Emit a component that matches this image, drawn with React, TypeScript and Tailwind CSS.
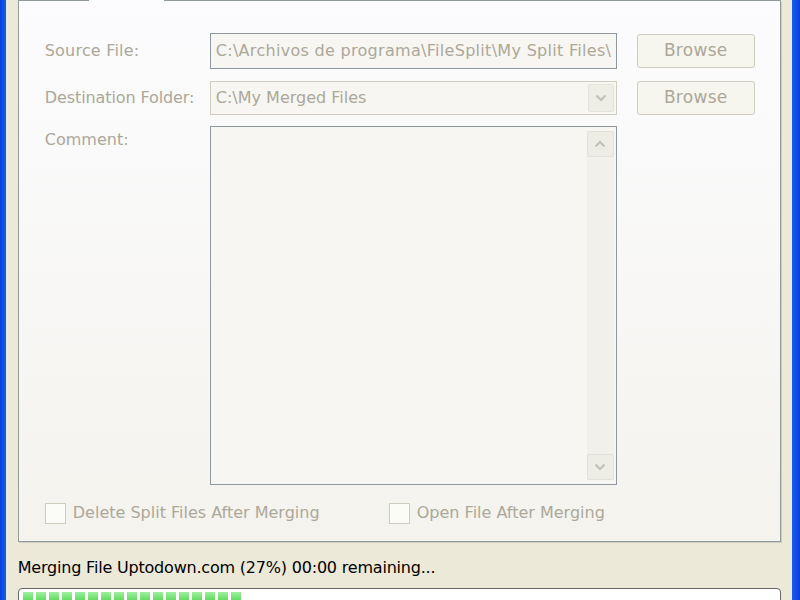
import React from "react";

const font = { fontFamily: '"DejaVu Sans", Verdana, sans-serif' };

function Chevron({ up }: { up?: boolean }) {
  return (
    <svg width="12" height="8" viewBox="0 0 12 8">
      <path
        d={up ? "M1.5 6.5 L6 2 L10.5 6.5" : "M1.5 1.5 L6 6 L10.5 1.5"}
        fill="none"
        stroke="#c3c1b6"
        strokeWidth="2.2"
      />
    </svg>
  );
}

function Browse() {
  return (
    <div className="flex h-[34px] w-[118px] items-center justify-center rounded-[3px] border border-[#cfcdc0] bg-[#f6f5ee] text-[17px] tracking-[0.3px] text-[#aca899]">
      Browse
    </div>
  );
}

function Check({ label }: { label: string }) {
  return (
    <div className="flex items-center gap-[7px]">
      <div className="h-[21px] w-[21px] border border-[#cfcdc0] bg-[#fbfbf8]" />
      <span className="text-[16px] text-[#aca899]">{label}</span>
    </div>
  );
}

export default function App() {
  const blocks = Array.from({ length: 17 });
  return (
    <div style={font} className="flex h-[600px] w-[800px] overflow-hidden bg-[#ece9d8]">
      <div className="w-[7px] bg-gradient-to-r from-[#0b3fd8] to-[#1a5cf0]" />
      <div className="flex flex-1 flex-col pl-[12px] pr-[11px]">
        <div className="flex h-[542px] shrink-0 flex-col">
          <div className="flex h-px">
            <div className="w-[71px] bg-[#919b9c]" />
            <div className="w-[75px] bg-[#fcfcfe]" />
            <div className="flex-1 bg-[#919b9c]" />
          </div>
          <div className="flex flex-1 flex-col border-x border-b border-[#919b9c] bg-gradient-to-b from-[#fcfcfe] to-[#f4f3ee] pl-[26px] pt-[32px] shadow-[1px_1px_0_#d0cec2]">
            <div className="flex items-center">
              <div className="w-[165px] text-[16px] tracking-[0.2px] text-[#aca899]">Source File:</div>
              <div className="flex h-[36px] w-[407px] items-center border border-[#8f979f] bg-[#f7f6f2] pl-[5px] text-[16px] tracking-[0.3px] text-[#aca899]">
                C:\Archivos de programa\FileSplit\My Split Files\
              </div>
              <div className="ml-[20px]">
                <Browse />
              </div>
            </div>
            <div className="mt-[12px] flex items-center">
              <div className="w-[165px] text-[16px] tracking-[-0.1px] text-[#aca899]">Destination Folder:</div>
              <div className="flex h-[34px] w-[407px] items-center border border-[#cfcdc0] bg-[#f7f6f2] p-[2px] text-[16px] text-[#aca899]">
                <span className="flex-1 pl-[3px]">C:\My Merged Files</span>
                <div className="flex h-full w-[26px] items-center justify-center rounded-[2px] border border-[#e6e4da] bg-[#eeede6]">
                  <Chevron />
                </div>
              </div>
              <div className="ml-[20px]">
                <Browse />
              </div>
            </div>
            <div className="mt-[11px] flex">
              <div className="w-[165px] pt-[2px] text-[16px] text-[#aca899]">Comment:</div>
              <div className="flex h-[359px] w-[407px] justify-end border border-[#8f979f] bg-[#f7f6f2] p-[4px] pr-[2px]">
                <div className="flex w-[27px] flex-col justify-between bg-[#f1f0ea]">
                  <div className="flex h-[26px] items-center justify-center rounded-[2px] border border-[#e4e2d8] bg-[#eeede5]">
                    <Chevron up />
                  </div>
                  <div className="flex h-[26px] items-center justify-center rounded-[2px] border border-[#e4e2d8] bg-[#eeede5]">
                    <Chevron />
                  </div>
                </div>
              </div>
            </div>
            <div className="mt-[16px] flex items-center">
              <div className="w-[344px]">
                <Check label="Delete Split Files After Merging" />
              </div>
              <Check label="Open File After Merging" />
            </div>
          </div>
        </div>
        <div className="mt-[14px] text-[16px] tracking-[-0.2px] text-black">
          Merging File Uptodown.com (27%) 00:00 remaining...
        </div>
        <div className="mt-[8px] flex h-[30px] w-[763px] shrink-0 gap-[3px] rounded-t-[4px] border border-[#686868] bg-white pl-[4px] pt-[3px]">
          {blocks.map((_, i) => (
            <div
              key={i}
              className="h-full w-[10px] bg-gradient-to-b from-[#9ef09e] via-[#2dd22d] to-[#2dd22d]"
            />
          ))}
        </div>
      </div>
      <div className="w-[10px] bg-gradient-to-r from-[#1a5cf0] to-[#0b3fd8]" />
    </div>
  );
}
